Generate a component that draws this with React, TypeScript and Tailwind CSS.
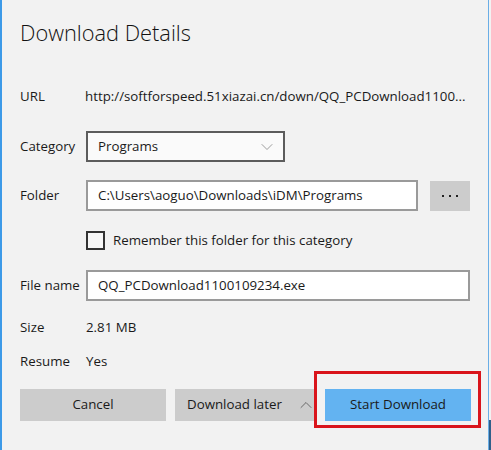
import { ChevronDown, ChevronUp } from "lucide-react";

const font = { fontFamily: '"Segoe UI", "Open Sans", "Noto Sans", sans-serif' };

function Label({ children }: { children: React.ReactNode }) {
    return <div className="w-[66px] shrink-0">{children}</div>;
}

export default function App() {
    return (
        <div
            className="relative w-[491px] h-[450px] overflow-hidden bg-[#f2f2f2] text-[13.3px] text-[#1a1a1a] whitespace-nowrap"
            style={font}
        >
            {/* window edges */}
            <div className="absolute left-0 top-0 h-full w-[2px] bg-[#3d9ae8]" />
            <div className="absolute left-[488px] top-0 h-full w-[1px] bg-[#6aaee6]" />
            <div className="absolute left-[489px] top-[420px] h-[30px] w-[2px] bg-[#2f5f8a]" />

            <div className="flex flex-col pl-[20px] pt-[17px]">
                <div className="h-[32px] text-[21.8px] leading-[32px] font-light text-[#111]">Download Details</div>

                <div className="mt-[38px] flex h-[20px] items-center">
                    <Label>URL</Label>
                    <div className="-ml-[1px]">http://softforspeed.51xiazai.cn/down/QQ_PCDownload1100...</div>
                </div>

                <div className="mt-[24px] flex h-[31px] items-center">
                    <Label>Category</Label>
                    <div className="flex h-[31px] w-[199px] items-center justify-between border-2 border-[#5c5c5c] bg-[#fafafa] pl-[10px] pr-[6px]">
                        <span>Programs</span>
                        <ChevronDown className="h-[20px] w-[20px] text-[#8a8a8a]" strokeWidth={1} />
                    </div>
                </div>

                <div className="mt-[18px] flex h-[31px] items-center">
                    <Label>Folder</Label>
                    <div className="flex h-[31px] w-[332px] items-center border-2 border-[#9a9a9a] bg-white pl-[10px]">
                        C:\Users\aoguo\Downloads\iDM\Programs
                    </div>
                    <div className="ml-[12px] flex h-[30px] w-[40px] items-center justify-center gap-[5px] bg-[#cccccc]">
                        <span className="h-[2px] w-[2px] bg-[#222]" />
                        <span className="h-[2px] w-[2px] bg-[#222]" />
                        <span className="h-[2px] w-[2px] bg-[#222]" />
                    </div>
                </div>

                <div className="mt-[20px] flex h-[19px] items-center pl-[66px]">
                    <div className="h-[19px] w-[19px] border-2 border-[#333] bg-[#f7f7f7]" />
                    <span className="ml-[8px]">Remember this folder for this category</span>
                </div>

                <div className="mt-[20px] flex h-[31px] items-center">
                    <Label>File name</Label>
                    <div className="flex h-[31px] w-[384px] items-center border-2 border-[#9a9a9a] bg-white pl-[10px]">
                        QQ_PCDownload1100109234.exe
                    </div>
                </div>

                <div className="mt-[17px] flex h-[20px] items-center">
                    <Label>Size</Label>
                    <div>2.81 MB</div>
                </div>

                <div className="mt-[14px] flex h-[20px] items-center">
                    <Label>Resume</Label>
                    <div>Yes</div>
                </div>

                <div className="mt-[17px] flex h-[32px] gap-[9px]">
                    <div className="flex w-[146px] items-center justify-center bg-[#cccccc]">Cancel</div>
                    <div className="flex w-[141px] items-center bg-[#cccccc] pl-[12px]">
                        <span>Download later</span>
                        <ChevronUp className="ml-[14px] h-[20px] w-[20px] text-[#555]" strokeWidth={1} />
                    </div>
                    <div className="flex w-[146px] items-center justify-center bg-[#63b3f1]">Start Download</div>
                </div>
            </div>

            {/* highlight frame */}
            <div className="absolute left-[314px] top-[371px] h-[57px] w-[167px] border-[3px] border-[#d9141b]" />
        </div>
    );
}
